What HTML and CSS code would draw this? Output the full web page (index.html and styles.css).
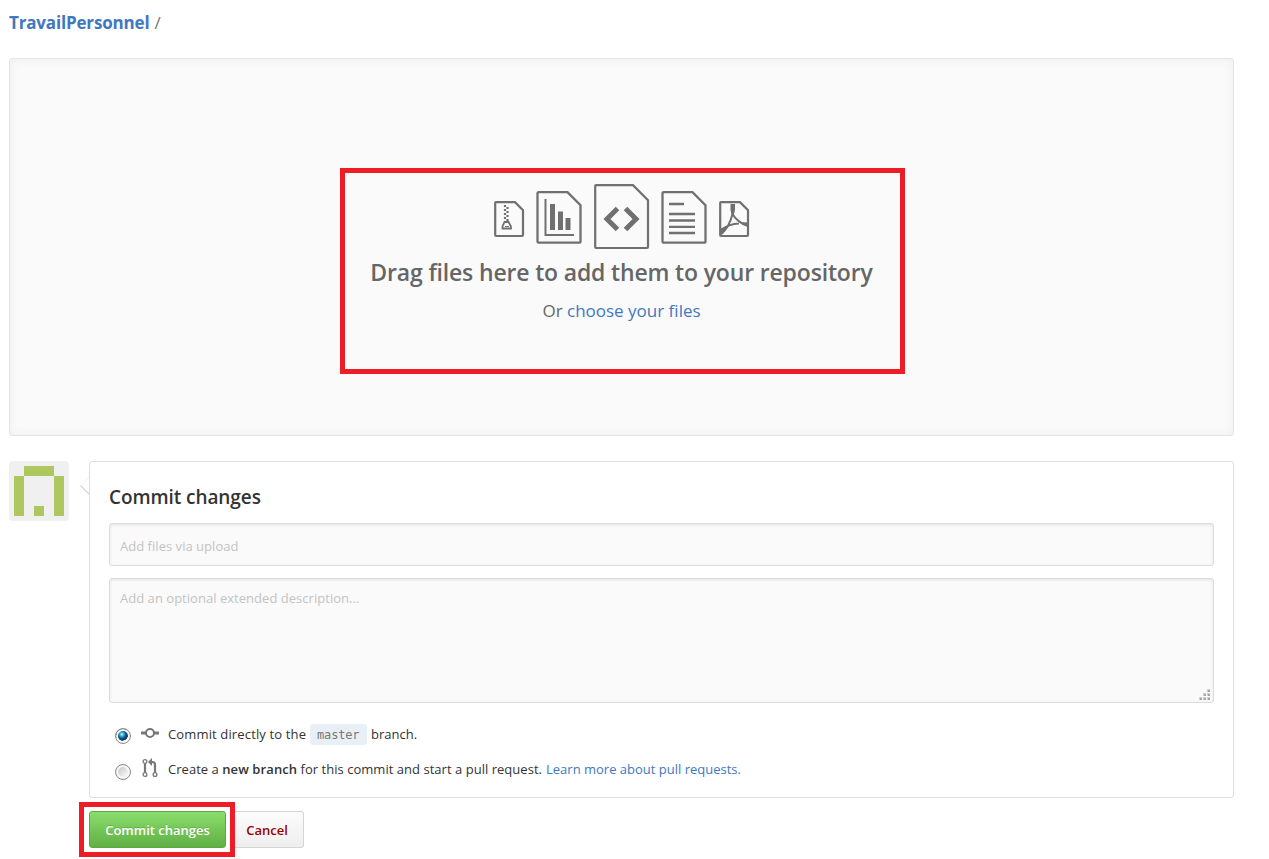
FILE: index.html
```
<!DOCTYPE html>
<html lang="en">
<head>
<meta charset="utf-8">
<title>Upload files</title>
<link rel="stylesheet" href="styles.css">
</head>
<body>
<main class="page">
  <nav class="breadcrumb"><a class="repo" href="#">TravailPersonnel</a><span class="slash">/</span></nav>

  <section class="dropzone">
    <div class="drop-focus">
      <div class="file-icons">
        <svg class="i-small" width="31" height="37" viewBox="0 0 31 37" fill="none" stroke="#707070" stroke-width="2.200"><path d="M1.200 2.500Q1 1.200 2 1.200H21L29 9.200V34Q29 35 28 35H2Q1.200 35 1.200 34Z"/><path d="M11 4V20M13.500 6V22" stroke-dasharray="2 2"/><path d="M10.500 21H14.500L17 25.500V27.500H8.500V25.500Z" stroke-width="1.800"/><path d="M11 25.500H15" stroke-width="1"/></svg>
        <svg class="i-page" width="46" height="54" viewBox="0 0 46 54" fill="none" stroke="#707070" stroke-width="2.300"><path d="M1.500 3.500Q1.500 2.200 3 2.200H31.500L44.500 15.200V51.500Q44.500 52.700 43 52.700H3Q1.500 52.700 1.500 51.500Z"/><path d="M9.500 9V45H38" stroke-width="2"/><path d="M16.500 14V40M24.500 21.500V40M32 28V40" stroke-width="5"/></svg>
        <svg class="i-code" width="56" height="66" viewBox="0 0 56 66" fill="none" stroke="#707070" stroke-width="2.200"><path d="M1.200 2Q1.200 1.200 2 1.200H39L54 16.200V63Q54 64 53 64H2Q1.200 64 1.200 63Z"/><path d="M23.500 24.500L13 35L23.500 45.500M31.500 24.500L42 35L31.500 45.500" stroke-width="5"/></svg>
        <svg class="i-page" width="46" height="54" viewBox="0 0 46 54" fill="none" stroke="#707070" stroke-width="2.300"><path d="M1.500 3.500Q1.500 2.200 3 2.200H31.500L44.500 15.200V51.500Q44.500 52.700 43 52.700H3Q1.500 52.700 1.500 51.500Z"/><path d="M8 14H23M8 24H34M8 30.500H34M8 36.800H34M8 43H34"/></svg>
        <svg class="i-small i-pdf" width="31" height="37" viewBox="0 0 31 37" fill="none" stroke="#707070" stroke-width="2.200"><path d="M1.200 2Q1.200 1.200 2 1.200H21L29 9.200V34Q29 35 28 35H2Q1.200 35 1.200 34Z"/><path d="M13.500 4V13Q18 21 28 24.500M13.500 13Q10 27 2 33M1.500 29Q10 23 20 22.500" stroke-width="2"/><path d="M11.500 3H16V9L14.500 15H13L11.500 9ZM20 21L29 21.500V26Q24 25 20 21ZM1 28L9 25L4 33L1 34Z" fill="#707070" stroke="none"/></svg>
      </div>
      <h2 class="drop-title">Drag files here to add them to your repository</h2>
      <p class="drop-alt">Or <a href="#">choose your files</a></p>
    </div>
  </section>

  <section class="commit">
    <svg class="avatar" width="60" height="60" viewBox="0 0 60 60" shape-rendering="crispEdges"><rect width="60" height="60" rx="4" fill="#f0f0f0" shape-rendering="auto"/><path fill="#aec75f" d="M15 5H45V15H15ZM5 15H15V55H5ZM45 15H55V55H45ZM25 45H35V55H25Z"/></svg>
    <div class="commit-main">
      <form class="commit-box">
        <svg class="pointer" width="9" height="18" viewBox="0 0 9 18" fill="none"><path d="M9 0L.5 8.500" stroke="#f2f2f2"/><path d="M.5 8.500L9 17" stroke="#d5d5d5" stroke-width="1.200"/></svg>
        <h3 class="commit-title">Commit changes</h3>
        <div class="field summary">Add files via upload</div>
        <div class="field description">Add an optional extended description...
          <svg class="grip" width="12" height="12" viewBox="0 0 12 12" shape-rendering="crispEdges"><path fill="#d0d0d0" d="M8 0h3v3H8zM4 4h3v3H4zM8 4h3v3H8zM0 8h3v3H0zM4 8h3v3H4zM8 8h3v3H8z"/><path fill="#a4a4a4" d="M9 1h2v2H9zM5 5h2v2H5zM9 5h2v2H9zM1 9h2v2H1zM5 9h2v2H5zM9 9h2v2H9z"/></svg>
        </div>
        <div class="choice direct">
          <i class="radio checked"></i>
          <svg class="git" width="18" height="18" viewBox="0 0 18 18" fill="none" stroke="#777" stroke-width="3"><path d="M0 9H5M13 9H18"/><circle cx="9" cy="9" r="4" stroke-width="2"/></svg>
          <span class="direct-text">Commit directly to the</span><code class="branch">master</code><span>branch.</span>
        </div>
        <div class="choice pull">
          <i class="radio"></i>
          <svg class="git" width="18" height="20" viewBox="0 0 18 20" fill="none" stroke="#777" stroke-width="2.200"><path d="M3 5V15M13 15V7Q13 4 10.500 4H8"/><path d="M10 0V8L6 4Z" fill="#777" stroke="none"/><g stroke-width="1.300" fill="#fff"><circle cx="3" cy="3.500" r="1.900"/><circle cx="3" cy="16.500" r="1.900"/><circle cx="13" cy="16.500" r="1.900"/></g></svg>
          <span class="pull-text">Create a <b>new branch</b> for this commit and start a pull request.</span><a class="learn" href="#">Learn more about pull requests.</a>
        </div>
      </form>
      <div class="actions">
        <div class="submit-focus"><button class="btn primary" type="button">Commit changes</button></div>
        <button class="btn cancel" type="button">Cancel</button>
      </div>
    </div>
  </section>
</main>
</body>
</html>
```
FILE: styles.css
```
* { box-sizing: border-box; }
body { margin: 0; height: 859px; overflow: hidden; background: #fff; color: #333; font: 13px/20px "Open Sans", "Noto Sans", sans-serif; }
a { color: #4078c0; text-decoration: none; }
span, a { white-space: nowrap; }
h2, h3, p { margin: 0; }
svg { display: block; flex: none; }
.page { width: 1225px; margin-left: 9px; padding-top: 9px; }
.breadcrumb { height: 49px; font-size: 17px; line-height: 27px; color: #767676; display: flex; gap: 5px; }
.repo { font-weight: 700; letter-spacing: -.17px; }
.dropzone { height: 378px; padding: 109px 0 0 330px; background: #fafafa; border: 1px solid #e5e5e5; border-radius: 3px; box-shadow: inset 0 0 10px #eee; }
.drop-focus { width: 565px; height: 206px; padding-top: 11px; border: 5px solid #ee1c25; color: #666; text-align: center; }
.file-icons { height: 66px; display: flex; justify-content: center; align-items: center; gap: 12px; padding-right: 1px; }
.i-small { margin: 4px -1px 0 1px; }
.i-pdf { margin: 4px 1px 0 -1px; }
.i-page { margin-left: -1px; margin-right: 1px; }
.i-page:nth-child(2) { margin: 0; }
.drop-title { height: 34px; margin-top: 5px; padding-right: 2px; font-size: 23px; font-weight: 600; line-height: 34px; letter-spacing: -.165px; }
.drop-alt { height: 30px; margin-top: 8px; padding-right: 2px; font-size: 17px; line-height: 28px; }
.commit { display: flex; gap: 20px; margin-top: 25px; }
.commit-main { flex: 1; }
.commit-box { position: relative; height: 337px; padding: 20px 19px; border: 1px solid #ddd; border-radius: 3px; }
.pointer { position: absolute; left: -10px; top: 15px; }
.commit-title { height: 41px; font-size: 19px; line-height: 30px; font-weight: 600; letter-spacing: -.08px; }
.field { background: #fafafa; border: 1px solid #ddd; border-radius: 3px; box-shadow: inset 0 1px 3px rgba(0,0,0,.1); color: #c3c3c3; padding: 0 10px; letter-spacing: .03px; }
.summary { height: 43px; line-height: 44px; }
.description { position: relative; height: 125px; margin-top: 12px; padding-top: 9px; }
.grip { position: absolute; right: 2px; bottom: 1px; }
.choice { display: flex; align-items: center; height: 22px; padding-left: 6px; }
.direct { margin-top: 20px; }
.pull { margin-top: 14px; }
.radio { width: 16px; height: 16px; margin-top: 4px; border: 1px solid #8a8a8a; border-radius: 50%; box-shadow: inset 0 0 0 2px #f8f8f8; background: linear-gradient(135deg,#bcbcbc,#f4f4f4 75%); }
.checked { background: radial-gradient(circle at 42% 38%,#d8f5ff 0,#41aee0 16%,#0c5c8c 32%,#12344d 52%,#fff 56%); }
.git { margin: -3px 8px 0 11px; }
.direct .git { margin: -3px 9px 0 10px; }
.pull .git { margin-top: -4px; }
.direct-text { letter-spacing: .14px; }
.branch { width: 57px; height: 21px; margin: 0 4px; padding: 1px 7px; border-radius: 3px; background: #e8f0f6; color: #777; font: 12px/21px "DejaVu Sans Mono", monospace; letter-spacing: -.2px; }
.pull-text, .learn { margin-top: -2px; }
.pull-text { letter-spacing: .03px; }
.pull-text b { font-weight: 600; letter-spacing: .1px; }
.learn { margin-left: 4px; }
.actions { display: flex; margin: 4px 0 0 -10px; }
.submit-focus { width: 156px; height: 55px; padding: 4px 5px; border: 5px solid #ee1c25; }
.btn { height: 37px; font: 600 13px/20px "Open Sans", "Noto Sans", sans-serif; border: 1px solid #d5d5d5; border-radius: 3px; padding: 0; }
.primary { display: block; width: 137px; color: #fff; background: linear-gradient(#8add6d,#60b044); border-color: #5ca941; text-shadow: 0 -1px 0 rgba(0,0,0,.15); }
.cancel { width: 69px; margin-top: 9px; padding-right: 4px; border-left: 0; border-radius: 0 3px 3px 0; color: #900; background: linear-gradient(#fcfcfc,#eee); }
```
